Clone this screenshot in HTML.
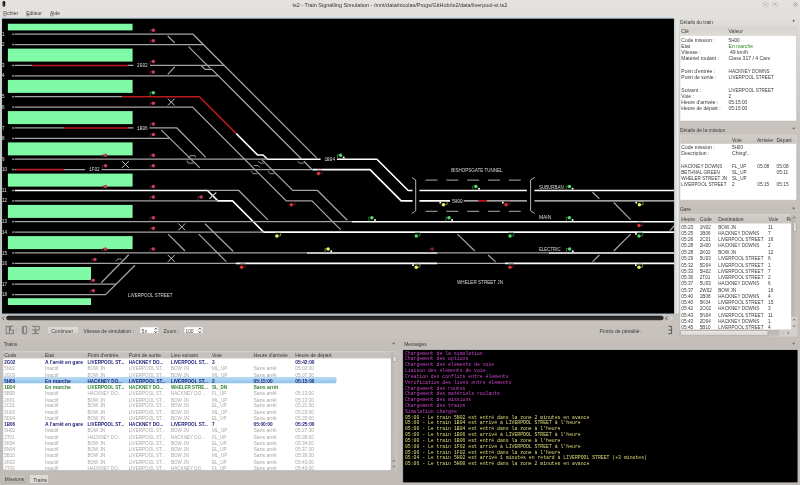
<!DOCTYPE html>
<html lang="fr"><head><meta charset="utf-8"><title>ts2 - Train Signalling Simulation</title>
<style>
html,body{margin:0;padding:0}
body{width:800px;height:485px;overflow:hidden;position:relative;background:#d2cec9;font-family:"Liberation Sans","DejaVu Sans",sans-serif}
#bg{position:absolute;left:0;top:0;width:800px;height:485px;
 background:linear-gradient(#e5e3e0 0,#e2e0dd 17.7px,#d8d5d1 60px,#cec9c4 130px,#c9c4bf 200px,#c7c2bd 339px,#c3beb9 340px,#c0bbb6 485px)}
#bg i{position:absolute;left:679px;top:18px;width:121px;height:322px;background:linear-gradient(#e0deda 0,#c8c3be 110px,#c5c0bb 191px,#c3beb9 322px)}
#ui{position:absolute;left:0;top:0;width:1536px;height:932px;transform:scale(.5208333) translateZ(0);transform-origin:0 0;filter:contrast(1.0001);font-size:9px;color:#3a3a3a}
#ui div,#ui span{position:absolute;box-sizing:border-box}
#ui span{white-space:nowrap;line-height:12px}
#cv{position:absolute;left:0;top:0;will-change:transform}
.w{background:#fff}
.hd{background:linear-gradient(#d6d3cf,#dfdcd8)}
.hdb{background:linear-gradient(#d2cec9,#c9c5c0)}
.hd2{background:linear-gradient(#c9c5c0,#c1bdb8);border-bottom:1px solid #b0aca7}
.g{color:#a6a6a6}
.b{color:#22227c;font-weight:bold}
.gr{color:#2f7f2f;font-weight:bold}
.m{font-family:"Liberation Mono","DejaVu Sans Mono",monospace;font-size:9.22px;line-height:11px}
.mg{color:#c846c8}
.ye{color:#dede7a}
u{text-decoration:underline}
</style></head><body>
<div id="bg"><i></i></div>
<div id="ui">
<span style="left:561.60px;top:3.60px;color:#333;font-size:10.5px">ts2 - Train Signalling Simulation - /mnt/data/nicolas/Progs/GitHub/ts2/data/liverpool-st.ts2</span>
<div style="left:5.38px;top:1.92px;width:4.99px;height:11.14px;background:#151515;border-radius:2.5px"></div>
<div style="left:6.34px;top:3.84px;width:1.92px;height:1.92px;background:#722;border-radius:50%"></div>
<div style="left:6.34px;top:6.72px;width:1.92px;height:1.92px;background:#663;border-radius:50%"></div>
<div style="left:6.34px;top:9.60px;width:1.92px;height:1.92px;background:#9a9;border-radius:50%"></div>
<div style="left:1464.38px;top:2.88px;width:11.14px;height:11.14px;border-radius:50%;background:radial-gradient(#f3f2f1,#d9d6d3);border:1px solid #bfbbb7"></div>
<div style="left:1482.43px;top:2.88px;width:11.14px;height:11.14px;border-radius:50%;background:radial-gradient(#f3f2f1,#d9d6d3);border:1px solid #bfbbb7"></div>
<div style="left:1521.98px;top:2.88px;width:11.14px;height:11.14px;border-radius:50%;background:radial-gradient(#f3f2f1,#d9d6d3);border:1px solid #bfbbb7"></div>
<svg style="position:absolute;left:0;top:0" width="1536" height="20" viewBox="0 0 800 10.4167"><g fill="none" stroke="#6a6a6a" stroke-width="0.7"><path d="M764.3 3.8l1.3 1.3 1.3-1.3"/><path d="M773.7 5.0l1.3-1.3 1.3 1.3"/><path d="M794.4 3.2l2.4 2.4M796.8 3.2l-2.4 2.4"/></g></svg>
<span style="left:6.14px;top:19.92px;font-size:9.5px"><u>F</u>ichier</span>
<span style="left:50.50px;top:19.92px;font-size:9.5px"><u>E</u>diteur</span>
<span style="left:96.00px;top:19.92px;font-size:9.5px"><u>A</u>ide</span>
<div style="left:2.50px;top:33.79px;width:1292.93px;height:570.43px;background:#a6c3d6;border-radius:2px"></div>
<div style="left:3.84px;top:35.90px;width:1290.24px;height:566.21px;background:#000"></div>
<div style="left:12.10px;top:605.95px;width:1261.44px;height:9.02px;background:linear-gradient(#1c1c1c,#343434);border-radius:4px"></div>
<div style="left:1296.38px;top:35.71px;width:7.30px;height:566.78px;background:linear-gradient(90deg,#d9d6d2,#ebe9e7 60%,#dddad6);border-radius:3px"></div>
<div style="left:90.05px;top:625.54px;width:61.63px;height:16.13px;border-radius:3px;background:linear-gradient(#dedbd7,#d2cec9);border:1px solid #bcb8b3"></div>
<span style="left:98.30px;top:629.52px;;font-size:9.7px">Continuer</span>
<span style="left:160.32px;top:629.52px;;font-size:9.7px">Vitesse de simulation :</span>
<div style="left:268.42px;top:626.50px;width:36.86px;height:14.78px;background:#fff;border:1px solid #b4b0ab;border-radius:3px"></div>
<span style="left:271.87px;top:629.52px;;font-size:9.7px">5x</span>
<span style="left:313.92px;top:629.52px;;font-size:9.7px">Zoom :</span>
<div style="left:352.51px;top:626.50px;width:37.63px;height:14.78px;background:#fff;border:1px solid #b4b0ab;border-radius:3px"></div>
<span style="left:356.16px;top:629.52px;;font-size:9.2px">100</span>
<span style="left:1151.04px;top:629.52px;;font-size:9.7px">Points de pénalité :</span>
<span style="left:1305.60px;top:37.58px;font-size:9.5px">Détails du train</span>
<div style="left:1304.83px;top:51.65px;width:225.41px;height:181.06px;background:#fff;border:1px solid #b9b5b0;border-radius:2px"></div>
<div class="hd" style="left:1305.60px;top:52.42px;width:223.87px;height:17.09px;"></div>
<span style="left:1308.10px;top:55.44px;;font-size:9.7px">Clé</span>
<span style="left:1398.91px;top:55.44px;;font-size:9.7px">Valeur</span>
<span style="left:1308.10px;top:71.38px;;font-size:9.7px">Code mission :</span>
<span style="left:1398.91px;top:71.38px;;font-size:8.8px">5H00</span>
<span style="left:1308.10px;top:83.38px;;font-size:9.7px">Etat</span>
<span style="left:1398.91px;top:83.38px;color:#2a8a2a;font-size:9.7px">En marche</span>
<span style="left:1308.10px;top:95.38px;;font-size:9.7px">Vitesse :</span>
<span style="left:1401.60px;top:95.38px;;font-size:9.7px">49 km/h</span>
<span style="left:1308.10px;top:107.38px;;font-size:9.7px">Matériel roulant :</span>
<span style="left:1398.91px;top:107.38px;;font-size:9.7px">Class 317 / 4 Cars</span>
<span style="left:1308.10px;top:131.38px;;font-size:9.7px">Point d'entrée :</span>
<span style="left:1398.91px;top:131.38px;;font-size:8.8px">HACKNEY DOWNS</span>
<span style="left:1308.10px;top:143.38px;;font-size:9.7px">Point de sortie :</span>
<span style="left:1398.91px;top:143.38px;;font-size:8.8px">LIVERPOOL STREET</span>
<span style="left:1308.10px;top:167.38px;;font-size:9.7px">Suivant :</span>
<span style="left:1398.91px;top:167.38px;;font-size:8.8px">LIVERPOOL STREET</span>
<span style="left:1308.10px;top:179.38px;;font-size:9.7px">Voie :</span>
<span style="left:1398.91px;top:179.38px;;font-size:9.2px">2</span>
<span style="left:1308.10px;top:191.38px;;font-size:9.7px">Heure d'arrivée :</span>
<span style="left:1398.91px;top:191.38px;;font-size:9.2px">05:15:00</span>
<span style="left:1308.10px;top:203.38px;;font-size:9.7px">Heure de départ :</span>
<span style="left:1398.91px;top:203.38px;;font-size:9.2px">05:15:00</span>
<span style="left:1305.60px;top:243.60px;font-size:9.5px">Détails de la mission</span>
<div style="left:1304.83px;top:258.43px;width:225.41px;height:126.53px;background:#fff;border:1px solid #b9b5b0;border-radius:2px"></div>
<div class="hdb" style="left:1305.60px;top:259.20px;width:223.87px;height:16.51px;"></div>
<span style="left:1405.44px;top:263.76px;;font-size:9.7px">Voie</span>
<span style="left:1453.44px;top:263.76px;;font-size:9.7px">Arrivée</span>
<span style="left:1490.69px;top:263.76px;;font-size:9.7px">Départ</span>
<span style="left:1308.10px;top:277.01px;;font-size:9.7px">Code mission :</span>
<span style="left:1405.44px;top:277.01px;;font-size:8.8px">5H00</span>
<span style="left:1308.10px;top:289.10px;;font-size:9.7px">Description :</span>
<span style="left:1405.44px;top:289.10px;;font-size:9.7px">Chingf...</span>
<span style="left:1308.10px;top:312.91px;;font-size:8.8px">HACKNEY DOWNS</span>
<span style="left:1405.44px;top:312.91px;;font-size:8.8px">FL_UP</span>
<span style="left:1454.02px;top:312.91px;;font-size:9.2px">05:08</span>
<span style="left:1491.07px;top:312.91px;;font-size:9.2px">05:08</span>
<span style="left:1308.10px;top:324.95px;;font-size:8.8px">BETHNAL GREEN</span>
<span style="left:1405.44px;top:324.95px;;font-size:8.8px">SL_UP</span>
<span style="left:1454.02px;top:324.95px;;font-size:9.2px"></span>
<span style="left:1491.07px;top:324.95px;;font-size:9.2px">05:11</span>
<span style="left:1308.10px;top:336.99px;;font-size:8.8px">WHELER STREET JN</span>
<span style="left:1405.44px;top:336.99px;;font-size:8.8px">SL_UP</span>
<span style="left:1454.02px;top:336.99px;;font-size:9.2px"></span>
<span style="left:1491.07px;top:336.99px;;font-size:9.2px"></span>
<span style="left:1308.10px;top:349.03px;;font-size:8.8px">LIVERPOOL STREET</span>
<span style="left:1405.44px;top:349.03px;;font-size:9.2px">2</span>
<span style="left:1454.02px;top:349.03px;;font-size:9.2px">05:15</span>
<span style="left:1491.07px;top:349.03px;;font-size:9.2px">05:15</span>
<span style="left:1305.60px;top:396.62px;font-size:9.5px">Gare</span>
<div style="left:1304.83px;top:411.26px;width:226.56px;height:235.01px;background:#fff;border:1px solid #b9b5b0;border-radius:2px"></div>
<div class="hdb" style="left:1305.60px;top:412.03px;width:225.02px;height:17.28px;"></div>
<span style="left:1308.10px;top:416.21px;;font-size:9.7px">Heure</span>
<span style="left:1343.62px;top:416.21px;;font-size:9.7px">Code</span>
<span style="left:1379.14px;top:416.21px;;font-size:9.7px">Destination</span>
<span style="left:1475.52px;top:416.21px;;font-size:9.7px">Voie</span>
<span style="left:1510.27px;top:416.21px;;font-size:9.7px">Re</span>
<span style="left:1308.10px;top:430.42px;;font-size:9.2px">05:23</span>
<span style="left:1343.62px;top:430.42px;;font-size:8.8px">1N02</span>
<span style="left:1379.14px;top:430.42px;;font-size:8.8px">BOW JN</span>
<span style="left:1474.56px;top:430.42px;;font-size:9.2px">11</span>
<span style="left:1308.10px;top:442.44px;;font-size:9.2px">05:25</span>
<span style="left:1343.62px;top:442.44px;;font-size:8.8px">1B06</span>
<span style="left:1379.14px;top:442.44px;;font-size:8.8px">HACKNEY DOWNS</span>
<span style="left:1474.56px;top:442.44px;;font-size:9.2px">7</span>
<span style="left:1308.10px;top:454.45px;;font-size:9.2px">05:26</span>
<span style="left:1343.62px;top:454.45px;;font-size:8.8px">2C01</span>
<span style="left:1379.14px;top:454.45px;;font-size:8.8px">LIVERPOOL STREET</span>
<span style="left:1474.56px;top:454.45px;;font-size:9.2px">16</span>
<span style="left:1308.10px;top:466.47px;;font-size:9.2px">05:28</span>
<span style="left:1343.62px;top:466.47px;;font-size:8.8px">2H00</span>
<span style="left:1379.14px;top:466.47px;;font-size:8.8px">HACKNEY DOWNS</span>
<span style="left:1474.56px;top:466.47px;;font-size:9.2px">2</span>
<span style="left:1308.10px;top:478.49px;;font-size:9.2px">05:28</span>
<span style="left:1343.62px;top:478.49px;;font-size:8.8px">2K02</span>
<span style="left:1379.14px;top:478.49px;;font-size:8.8px">BOW JN</span>
<span style="left:1474.56px;top:478.49px;;font-size:9.2px">12</span>
<span style="left:1308.10px;top:490.51px;;font-size:9.2px">05:29</span>
<span style="left:1343.62px;top:490.51px;;font-size:8.8px">5U03</span>
<span style="left:1379.14px;top:490.51px;;font-size:8.8px">LIVERPOOL STREET</span>
<span style="left:1474.56px;top:490.51px;;font-size:9.2px">6</span>
<span style="left:1308.10px;top:502.53px;;font-size:9.2px">05:32</span>
<span style="left:1343.62px;top:502.53px;;font-size:8.8px">5D04</span>
<span style="left:1379.14px;top:502.53px;;font-size:8.8px">LIVERPOOL STREET</span>
<span style="left:1474.56px;top:502.53px;;font-size:9.2px">1</span>
<span style="left:1308.10px;top:514.55px;;font-size:9.2px">05:33</span>
<span style="left:1343.62px;top:514.55px;;font-size:8.8px">5H02</span>
<span style="left:1379.14px;top:514.55px;;font-size:8.8px">LIVERPOOL STREET</span>
<span style="left:1474.56px;top:514.55px;;font-size:9.2px">7</span>
<span style="left:1308.10px;top:526.57px;;font-size:9.2px">05:36</span>
<span style="left:1343.62px;top:526.57px;;font-size:8.8px">2T01</span>
<span style="left:1379.14px;top:526.57px;;font-size:8.8px">LIVERPOOL STREET</span>
<span style="left:1474.56px;top:526.57px;;font-size:9.2px">2</span>
<span style="left:1308.10px;top:538.59px;;font-size:9.2px">05:37</span>
<span style="left:1343.62px;top:538.59px;;font-size:8.8px">5U03</span>
<span style="left:1379.14px;top:538.59px;;font-size:8.8px">HACKNEY DOWNS</span>
<span style="left:1474.56px;top:538.59px;;font-size:9.2px">6</span>
<span style="left:1308.10px;top:550.61px;;font-size:9.2px">05:37</span>
<span style="left:1343.62px;top:550.61px;;font-size:8.8px">2W02</span>
<span style="left:1379.14px;top:550.61px;;font-size:8.8px">BOW JN</span>
<span style="left:1474.56px;top:550.61px;;font-size:9.2px">16</span>
<span style="left:1308.10px;top:562.63px;;font-size:9.2px">05:40</span>
<span style="left:1343.62px;top:562.63px;;font-size:8.8px">1B08</span>
<span style="left:1379.14px;top:562.63px;;font-size:8.8px">HACKNEY DOWNS</span>
<span style="left:1474.56px;top:562.63px;;font-size:9.2px">4</span>
<span style="left:1308.10px;top:574.65px;;font-size:9.2px">05:40</span>
<span style="left:1343.62px;top:574.65px;;font-size:8.8px">5K04</span>
<span style="left:1379.14px;top:574.65px;;font-size:8.8px">LIVERPOOL STREET</span>
<span style="left:1474.56px;top:574.65px;;font-size:9.2px">15</span>
<span style="left:1308.10px;top:586.67px;;font-size:9.2px">05:42</span>
<span style="left:1343.62px;top:586.67px;;font-size:8.8px">2O02</span>
<span style="left:1379.14px;top:586.67px;;font-size:8.8px">HACKNEY DOWNS</span>
<span style="left:1474.56px;top:586.67px;;font-size:9.2px">3</span>
<span style="left:1308.10px;top:598.68px;;font-size:9.2px">05:43</span>
<span style="left:1343.62px;top:598.68px;;font-size:8.8px">5N04</span>
<span style="left:1379.14px;top:598.68px;;font-size:8.8px">LIVERPOOL STREET</span>
<span style="left:1474.56px;top:598.68px;;font-size:9.2px">11</span>
<span style="left:1308.10px;top:610.70px;;font-size:9.2px">05:43</span>
<span style="left:1343.62px;top:610.70px;;font-size:8.8px">2D04</span>
<span style="left:1379.14px;top:610.70px;;font-size:8.8px">HACKNEY DOWNS</span>
<span style="left:1474.56px;top:610.70px;;font-size:9.2px">1</span>
<span style="left:1308.10px;top:622.72px;;font-size:9.2px">05:45</span>
<span style="left:1343.62px;top:622.72px;;font-size:8.8px">5B10</span>
<span style="left:1379.14px;top:622.72px;;font-size:8.8px">LIVERPOOL STREET</span>
<span style="left:1474.56px;top:622.72px;;font-size:9.2px">4</span>
<div style="left:1519.10px;top:412.03px;width:11.71px;height:196.61px;background:linear-gradient(90deg,#b7b2ad,#c6c2bd)"></div>
<div style="left:1519.10px;top:608.64px;width:11.71px;height:24.58px;background:#d3cfca"></div>
<div style="left:1522.56px;top:426.24px;width:7.68px;height:19.20px;background:linear-gradient(90deg,#efeeec,#d2cfca);border:1px solid #9c9893;border-radius:3px"></div>
<div style="left:1305.60px;top:633.22px;width:225.22px;height:12.29px;background:linear-gradient(#b9b4af,#c6c2bd)"></div>
<div style="left:1496.64px;top:633.22px;width:34.18px;height:12.29px;background:#d3cfca"></div>
<div style="left:1306.37px;top:634.37px;width:168.19px;height:10.37px;background:linear-gradient(#ebe9e7,#d6d3cf);border:1px solid #a5a19c;border-radius:3px"></div>
<span style="left:7.10px;top:655.63px;font-size:9.5px">Trains</span>
<div style="left:4.61px;top:674.30px;width:758.78px;height:229.25px;background:#fff;border:1px solid #aaa6a1;border-radius:2px"></div>
<div class="hd2" style="left:5.38px;top:675.07px;width:747.26px;height:13.06px;"></div>
<span style="left:8.06px;top:677.14px;;font-size:9.7px">Code</span>
<span style="left:86.40px;top:677.14px;;font-size:9.7px">Etat</span>
<span style="left:168.00px;top:677.14px;;font-size:9.7px">Point d'entrée</span>
<span style="left:247.30px;top:677.14px;;font-size:9.7px">Point de sortie</span>
<span style="left:328.32px;top:677.14px;;font-size:9.7px">Lieu suivant</span>
<span style="left:407.04px;top:677.14px;;font-size:9.7px">Voie</span>
<span style="left:486.72px;top:677.14px;;font-size:9.7px">Heure d'arrivée</span>
<span style="left:566.98px;top:677.14px;;font-size:9.7px">Heure de départ</span>
<div style="left:4.22px;top:724.26px;width:641.47px;height:11.90px;background:linear-gradient(#b9dcf3,#8ec3ea);border-radius:2px"></div>
<span class="b" style="left:8.06px;top:689.62px;;font-size:8.8px">2G02</span>
<span class="b" style="left:86.40px;top:689.62px;;font-size:9.7px">A l'arrêt en gare</span>
<span class="b" style="left:168.00px;top:689.62px;;font-size:8.8px">LIVERPOOL ST...</span>
<span class="b" style="left:247.30px;top:689.62px;;font-size:8.8px">HACKNEY DO...</span>
<span class="b" style="left:328.32px;top:689.62px;;font-size:8.8px">LIVERPOOL ST...</span>
<span class="b" style="left:407.04px;top:689.62px;;font-size:9.2px">3</span>
<span class="b" style="left:566.98px;top:689.62px;;font-size:9.2px">05:42:00</span>
<span class="g" style="left:8.06px;top:701.60px;;font-size:8.8px">5N02</span>
<span class="g" style="left:86.40px;top:701.60px;;font-size:9.7px">Inactif</span>
<span class="g" style="left:168.00px;top:701.60px;;font-size:8.8px">BOW JN</span>
<span class="g" style="left:247.30px;top:701.60px;;font-size:8.8px">LIVERPOOL ST...</span>
<span class="g" style="left:328.32px;top:701.60px;;font-size:8.8px">BOW JN</span>
<span class="g" style="left:407.04px;top:701.60px;;font-size:8.8px">ML_UP</span>
<span class="g" style="left:486.72px;top:701.60px;;font-size:9.7px">Sans arrêt</span>
<span class="g" style="left:566.98px;top:701.60px;;font-size:9.2px">05:02:30</span>
<span class="g" style="left:8.06px;top:713.58px;;font-size:8.8px">2G03</span>
<span class="g" style="left:86.40px;top:713.58px;;font-size:9.7px">Inactif</span>
<span class="g" style="left:168.00px;top:713.58px;;font-size:8.8px">BOW JN</span>
<span class="g" style="left:247.30px;top:713.58px;;font-size:8.8px">LIVERPOOL ST...</span>
<span class="g" style="left:328.32px;top:713.58px;;font-size:8.8px">BOW JN</span>
<span class="g" style="left:407.04px;top:713.58px;;font-size:8.8px">ML_UP</span>
<span class="g" style="left:486.72px;top:713.58px;;font-size:9.7px">Sans arrêt</span>
<span class="g" style="left:566.98px;top:713.58px;;font-size:9.2px">05:07:30</span>
<span class="b" style="left:8.06px;top:725.56px;;font-size:8.8px">5H00</span>
<span class="b" style="left:86.40px;top:725.56px;;font-size:9.7px">En marche</span>
<span class="b" style="left:168.00px;top:725.56px;;font-size:8.8px">HACKNEY DO...</span>
<span class="b" style="left:247.30px;top:725.56px;;font-size:8.8px">LIVERPOOL ST...</span>
<span class="b" style="left:328.32px;top:725.56px;;font-size:8.8px">LIVERPOOL ST...</span>
<span class="b" style="left:407.04px;top:725.56px;;font-size:9.2px">2</span>
<span class="b" style="left:486.72px;top:725.56px;;font-size:9.2px">05:15:00</span>
<span class="b" style="left:566.98px;top:725.56px;;font-size:9.2px">05:15:00</span>
<span class="gr" style="left:8.06px;top:737.54px;;font-size:8.8px">1B04</span>
<span class="gr" style="left:86.40px;top:737.54px;;font-size:9.7px">En marche</span>
<span class="gr" style="left:168.00px;top:737.54px;;font-size:8.8px">LIVERPOOL ST...</span>
<span class="gr" style="left:247.30px;top:737.54px;;font-size:8.8px">HACKNEY DO...</span>
<span class="gr" style="left:328.32px;top:737.54px;;font-size:8.8px">WHELER STRE...</span>
<span class="gr" style="left:407.04px;top:737.54px;;font-size:8.8px">SL_DN</span>
<span class="gr" style="left:486.72px;top:737.54px;;font-size:9.7px">Sans arrêt</span>
<span class="g" style="left:8.06px;top:749.52px;;font-size:8.8px">5B08</span>
<span class="g" style="left:86.40px;top:749.52px;;font-size:9.7px">Inactif</span>
<span class="g" style="left:168.00px;top:749.52px;;font-size:8.8px">HACKNEY DO...</span>
<span class="g" style="left:247.30px;top:749.52px;;font-size:8.8px">LIVERPOOL ST...</span>
<span class="g" style="left:328.32px;top:749.52px;;font-size:8.8px">HACKNEY DO...</span>
<span class="g" style="left:407.04px;top:749.52px;;font-size:8.8px">FL_UP</span>
<span class="g" style="left:486.72px;top:749.52px;;font-size:9.7px">Sans arrêt</span>
<span class="g" style="left:566.98px;top:749.52px;;font-size:9.2px">05:13:00</span>
<span class="g" style="left:8.06px;top:761.50px;;font-size:8.8px">2K01</span>
<span class="g" style="left:86.40px;top:761.50px;;font-size:9.7px">Inactif</span>
<span class="g" style="left:168.00px;top:761.50px;;font-size:8.8px">BOW JN</span>
<span class="g" style="left:247.30px;top:761.50px;;font-size:8.8px">LIVERPOOL ST...</span>
<span class="g" style="left:328.32px;top:761.50px;;font-size:8.8px">BOW JN</span>
<span class="g" style="left:407.04px;top:761.50px;;font-size:8.8px">ML_UP</span>
<span class="g" style="left:486.72px;top:761.50px;;font-size:9.7px">Sans arrêt</span>
<span class="g" style="left:566.98px;top:761.50px;;font-size:9.2px">05:13:30</span>
<span class="g" style="left:8.06px;top:773.48px;;font-size:8.8px">2C01</span>
<span class="g" style="left:86.40px;top:773.48px;;font-size:9.7px">Inactif</span>
<span class="g" style="left:168.00px;top:773.48px;;font-size:8.8px">BOW JN</span>
<span class="g" style="left:247.30px;top:773.48px;;font-size:8.8px">LIVERPOOL ST...</span>
<span class="g" style="left:328.32px;top:773.48px;;font-size:8.8px">BOW JN</span>
<span class="g" style="left:407.04px;top:773.48px;;font-size:8.8px">EL_UP</span>
<span class="g" style="left:486.72px;top:773.48px;;font-size:9.7px">Sans arrêt</span>
<span class="g" style="left:566.98px;top:773.48px;;font-size:9.2px">05:21:00</span>
<span class="g" style="left:8.06px;top:785.46px;;font-size:8.8px">5U03</span>
<span class="g" style="left:86.40px;top:785.46px;;font-size:9.7px">Inactif</span>
<span class="g" style="left:168.00px;top:785.46px;;font-size:8.8px">BOW JN</span>
<span class="g" style="left:247.30px;top:785.46px;;font-size:8.8px">LIVERPOOL ST...</span>
<span class="g" style="left:328.32px;top:785.46px;;font-size:8.8px">BOW JN</span>
<span class="g" style="left:407.04px;top:785.46px;;font-size:8.8px">ML_UP</span>
<span class="g" style="left:486.72px;top:785.46px;;font-size:9.7px">Sans arrêt</span>
<span class="g" style="left:566.98px;top:785.46px;;font-size:9.2px">05:23:00</span>
<span class="g" style="left:8.06px;top:797.44px;;font-size:8.8px">5D04</span>
<span class="g" style="left:86.40px;top:797.44px;;font-size:9.7px">Inactif</span>
<span class="g" style="left:168.00px;top:797.44px;;font-size:8.8px">BOW JN</span>
<span class="g" style="left:247.30px;top:797.44px;;font-size:8.8px">LIVERPOOL ST...</span>
<span class="g" style="left:328.32px;top:797.44px;;font-size:8.8px">BOW JN</span>
<span class="g" style="left:407.04px;top:797.44px;;font-size:8.8px">EL_UP</span>
<span class="g" style="left:486.72px;top:797.44px;;font-size:9.7px">Sans arrêt</span>
<span class="g" style="left:566.98px;top:797.44px;;font-size:9.2px">05:25:00</span>
<span class="b" style="left:8.06px;top:809.42px;;font-size:8.8px">1B06</span>
<span class="b" style="left:86.40px;top:809.42px;;font-size:9.7px">A l'arrêt en gare</span>
<span class="b" style="left:168.00px;top:809.42px;;font-size:8.8px">LIVERPOOL ST...</span>
<span class="b" style="left:247.30px;top:809.42px;;font-size:8.8px">HACKNEY DO...</span>
<span class="b" style="left:328.32px;top:809.42px;;font-size:8.8px">LIVERPOOL ST...</span>
<span class="b" style="left:407.04px;top:809.42px;;font-size:9.2px">7</span>
<span class="b" style="left:486.72px;top:809.42px;;font-size:9.2px">05:00:00</span>
<span class="b" style="left:566.98px;top:809.42px;;font-size:9.2px">05:25:00</span>
<span class="g" style="left:8.06px;top:821.40px;;font-size:8.8px">5H02</span>
<span class="g" style="left:86.40px;top:821.40px;;font-size:9.7px">Inactif</span>
<span class="g" style="left:168.00px;top:821.40px;;font-size:8.8px">BOW JN</span>
<span class="g" style="left:247.30px;top:821.40px;;font-size:8.8px">LIVERPOOL ST...</span>
<span class="g" style="left:328.32px;top:821.40px;;font-size:8.8px">BOW JN</span>
<span class="g" style="left:407.04px;top:821.40px;;font-size:8.8px">ML_UP</span>
<span class="g" style="left:486.72px;top:821.40px;;font-size:9.7px">Sans arrêt</span>
<span class="g" style="left:566.98px;top:821.40px;;font-size:9.2px">05:27:30</span>
<span class="g" style="left:8.06px;top:833.39px;;font-size:8.8px">2T01</span>
<span class="g" style="left:86.40px;top:833.39px;;font-size:9.7px">Inactif</span>
<span class="g" style="left:168.00px;top:833.39px;;font-size:8.8px">HACKNEY DO...</span>
<span class="g" style="left:247.30px;top:833.39px;;font-size:8.8px">LIVERPOOL ST...</span>
<span class="g" style="left:328.32px;top:833.39px;;font-size:8.8px">HACKNEY DO...</span>
<span class="g" style="left:407.04px;top:833.39px;;font-size:8.8px">FL_UP</span>
<span class="g" style="left:486.72px;top:833.39px;;font-size:9.7px">Sans arrêt</span>
<span class="g" style="left:566.98px;top:833.39px;;font-size:9.2px">05:28:00</span>
<span class="g" style="left:8.06px;top:845.37px;;font-size:8.8px">5K04</span>
<span class="g" style="left:86.40px;top:845.37px;;font-size:9.7px">Inactif</span>
<span class="g" style="left:168.00px;top:845.37px;;font-size:8.8px">BOW JN</span>
<span class="g" style="left:247.30px;top:845.37px;;font-size:8.8px">LIVERPOOL ST...</span>
<span class="g" style="left:328.32px;top:845.37px;;font-size:8.8px">BOW JN</span>
<span class="g" style="left:407.04px;top:845.37px;;font-size:8.8px">EL_UP</span>
<span class="g" style="left:486.72px;top:845.37px;;font-size:9.7px">Sans arrêt</span>
<span class="g" style="left:566.98px;top:845.37px;;font-size:9.2px">05:34:00</span>
<span class="g" style="left:8.06px;top:857.35px;;font-size:8.8px">5N04</span>
<span class="g" style="left:86.40px;top:857.35px;;font-size:9.7px">Inactif</span>
<span class="g" style="left:168.00px;top:857.35px;;font-size:8.8px">BOW JN</span>
<span class="g" style="left:247.30px;top:857.35px;;font-size:8.8px">LIVERPOOL ST...</span>
<span class="g" style="left:328.32px;top:857.35px;;font-size:8.8px">BOW JN</span>
<span class="g" style="left:407.04px;top:857.35px;;font-size:8.8px">EL_UP</span>
<span class="g" style="left:486.72px;top:857.35px;;font-size:9.7px">Sans arrêt</span>
<span class="g" style="left:566.98px;top:857.35px;;font-size:9.2px">05:37:30</span>
<span class="g" style="left:8.06px;top:869.33px;;font-size:8.8px">5B10</span>
<span class="g" style="left:86.40px;top:869.33px;;font-size:9.7px">Inactif</span>
<span class="g" style="left:168.00px;top:869.33px;;font-size:8.8px">BOW JN</span>
<span class="g" style="left:247.30px;top:869.33px;;font-size:8.8px">LIVERPOOL ST...</span>
<span class="g" style="left:328.32px;top:869.33px;;font-size:8.8px">BOW JN</span>
<span class="g" style="left:407.04px;top:869.33px;;font-size:8.8px">ML_UP</span>
<span class="g" style="left:486.72px;top:869.33px;;font-size:9.7px">Sans arrêt</span>
<span class="g" style="left:566.98px;top:869.33px;;font-size:9.2px">05:39:30</span>
<span class="g" style="left:8.06px;top:881.31px;;font-size:8.8px">2K03</span>
<span class="g" style="left:86.40px;top:881.31px;;font-size:9.7px">Inactif</span>
<span class="g" style="left:168.00px;top:881.31px;;font-size:8.8px">BOW JN</span>
<span class="g" style="left:247.30px;top:881.31px;;font-size:8.8px">LIVERPOOL ST...</span>
<span class="g" style="left:328.32px;top:881.31px;;font-size:8.8px">BOW JN</span>
<span class="g" style="left:407.04px;top:881.31px;;font-size:8.8px">EL_UP</span>
<span class="g" style="left:486.72px;top:881.31px;;font-size:9.7px">Sans arrêt</span>
<span class="g" style="left:566.98px;top:881.31px;;font-size:9.2px">05:43:00</span>
<span class="g" style="left:8.06px;top:893.29px;;font-size:8.8px">2T03</span>
<span class="g" style="left:86.40px;top:893.29px;;font-size:9.7px">Inactif</span>
<span class="g" style="left:168.00px;top:893.29px;;font-size:8.8px">HACKNEY DO...</span>
<span class="g" style="left:247.30px;top:893.29px;;font-size:8.8px">LIVERPOOL ST...</span>
<span class="g" style="left:328.32px;top:893.29px;;font-size:8.8px">HACKNEY DO...</span>
<span class="g" style="left:407.04px;top:893.29px;;font-size:8.8px">FL_UP</span>
<span class="g" style="left:486.72px;top:893.29px;;font-size:9.7px">Sans arrêt</span>
<span class="g" style="left:566.98px;top:893.29px;;font-size:9.2px">05:43:00</span>
<div style="left:750.14px;top:675.07px;width:12.48px;height:227.71px;background:linear-gradient(90deg,#b9b5b0,#c9c5c0)"></div>
<div style="left:753.79px;top:683.14px;width:8.06px;height:11.90px;background:linear-gradient(90deg,#efeeec,#cfccc7);border:1px solid #9c9893;border-radius:3px"></div>
<div style="left:2.69px;top:913.54px;width:46.85px;height:13.63px;background:linear-gradient(#c9c5c0,#bfbbb6);border:1px solid #a5a19c;border-top:none;border-radius:0 0 3px 3px"></div>
<span style="left:8.83px;top:915.41px;;font-size:9.7px">Missions</span>
<div style="left:56.45px;top:912.38px;width:37.25px;height:16.13px;background:#dedbd7;border:1px solid #b3afaa;border-top:none;border-radius:0 0 3px 3px"></div>
<span style="left:63.74px;top:915.79px;;font-size:9.7px">Trains</span>
<span style="left:776.06px;top:655.44px;font-size:9.5px">Messages</span>
<div style="left:772.99px;top:670.85px;width:758.98px;height:256.32px;background:#8e8a85;border-radius:2px"></div>
<div style="left:773.95px;top:671.62px;width:757.25px;height:254.78px;background:#000;border-radius:1px"></div>
<span class="m mg" style="left:777.41px;top:673.03px;">Chargement de la simulation</span>
<span class="m mg" style="left:777.41px;top:684.18px;">Chargement des options</span>
<span class="m mg" style="left:777.41px;top:695.34px;">Chargement des éléments de voie</span>
<span class="m mg" style="left:777.41px;top:706.49px;">Liaison des éléments de voie</span>
<span class="m mg" style="left:777.41px;top:717.65px;">Création des conflits entre éléments</span>
<span class="m mg" style="left:777.41px;top:728.80px;">Vérification des liens entre éléments</span>
<span class="m mg" style="left:777.41px;top:739.96px;">Chargement des routes</span>
<span class="m mg" style="left:777.41px;top:751.11px;">Chargement des matériels roulants</span>
<span class="m mg" style="left:777.41px;top:762.27px;">Chargement des missions</span>
<span class="m mg" style="left:777.41px;top:773.42px;">Chargement des trains</span>
<span class="m mg" style="left:777.41px;top:784.58px;">Simulation chargée</span>
<span class="m ye" style="left:777.41px;top:795.74px;">05:00 - Le train 5N02 est entré dans la zone 2 minutes en avance</span>
<span class="m ye" style="left:777.41px;top:806.89px;">05:00 - Le train 1B04 est arrivé à LIVERPOOL STREET à l'heure</span>
<span class="m ye" style="left:777.41px;top:818.05px;">05:00 - Le train 1B04 est entré dans la zone à l'heure</span>
<span class="m ye" style="left:777.41px;top:829.20px;">05:00 - Le train 1B06 est arrivé à LIVERPOOL STREET à l'heure</span>
<span class="m ye" style="left:777.41px;top:840.36px;">05:00 - Le train 1B06 est entré dans la zone à l'heure</span>
<span class="m ye" style="left:777.41px;top:851.51px;">05:00 - Le train 1F02 est arrivé à LIVERPOOL STREET à l'heure</span>
<span class="m ye" style="left:777.41px;top:862.67px;">05:00 - Le train 1F02 est entré dans la zone à l'heure</span>
<span class="m ye" style="left:777.41px;top:873.82px;">05:04 - Le train 5H02 est arrivé 1 minutes en retard à LIVERPOOL STREET (+3 minutes)</span>
<span class="m ye" style="left:777.41px;top:884.98px;">05:06 - Le train 5H00 est entré dans la zone 2 minutes en avance</span>
</div>
<svg id="cv" width="800" height="485" viewBox="0 0 800 485" font-family="'Liberation Sans','DejaVu Sans',sans-serif">
<clipPath id="cc"><rect x="2" y="18.7" width="672" height="294.9"/></clipPath><g clip-path="url(#cc)" stroke-linecap="butt">
<rect x="7.9" y="23.75" width="124.69999999999999" height="6.65" fill="#80faa6"/>
<rect x="7.9" y="48.6" width="124.69999999999999" height="13.00" fill="#80faa6"/>
<rect x="7.9" y="79.9" width="124.69999999999999" height="13.00" fill="#80faa6"/>
<rect x="7.9" y="111.1" width="124.69999999999999" height="13.00" fill="#80faa6"/>
<rect x="7.9" y="142.4" width="124.69999999999999" height="13.00" fill="#80faa6"/>
<rect x="7.9" y="173.6" width="124.69999999999999" height="13.00" fill="#80faa6"/>
<rect x="7.9" y="204.9" width="124.69999999999999" height="13.00" fill="#80faa6"/>
<rect x="7.9" y="236.1" width="124.69999999999999" height="13.00" fill="#80faa6"/>
<rect x="7.9" y="267" width="83.1" height="13.00" fill="#80faa6"/>
<rect x="7.9" y="298.2" width="83.1" height="6.80" fill="#80faa6"/>
<path d="M14.90 34.22 L193.00 34.22 L316.60 157.82" stroke="#a4a4a6" stroke-width="1.25" fill="none" />
<path d="M14.90 44.64 L203.40 44.64" stroke="#a4a4a6" stroke-width="1.25" fill="none" />
<path d="M167.75 36.00 L174.75 42.90" stroke="#a4a4a6" stroke-width="1.25" fill="none" />
<path d="M188.50 46.60 L210.30 68.40" stroke="#a4a4a6" stroke-width="1.25" fill="none" />
<path d="M14.90 65.47 L32.00 65.47" stroke="#a4a4a6" stroke-width="1.25" fill="none" />
<path d="M32.00 65.47 L128.00 65.47" stroke="#b81a1e" stroke-width="1.6" fill="none" />
<path d="M128.00 65.47 L133.50 65.47" stroke="#a4a4a6" stroke-width="1.25" fill="none" />
<path d="M150.00 65.47 L224.30 65.47" stroke="#a4a4a6" stroke-width="1.25" fill="none" />
<path d="M201.25 65.47 L205.00 69.40 L211.90 69.40 L301.20 158.70" stroke="#a4a4a6" stroke-width="1.25" fill="none" />
<path d="M303.75 161.25 L312.00 169.50" stroke="#a4a4a6" stroke-width="1.25" fill="none" />
<path d="M14.90 75.89 L218.40 75.89" stroke="#a4a4a6" stroke-width="1.25" fill="none" />
<path d="M174.75 66.90 L167.75 74.40" stroke="#a4a4a6" stroke-width="1.25" fill="none" />
<path d="M14.90 96.72 L122.50 96.72" stroke="#a4a4a6" stroke-width="1.25" fill="none" />
<path d="M122.50 96.72 L199.40 96.72 L236.30 133.62" stroke="#b81a1e" stroke-width="1.6" fill="none" />
<path d="M236.30 133.62 L257.50 154.90 L263.00 154.90 L267.60 159.22 L320.60 159.22" stroke="#ffffff" stroke-width="1.55" fill="none" />
<path d="M14.90 107.14 L192.50 107.14 L286.30 200.89 L311.90 200.89 L340.60 229.60" stroke="#a4a4a6" stroke-width="1.25" fill="none" />
<path d="M14.90 127.97 L64.00 127.97" stroke="#a4a4a6" stroke-width="1.25" fill="none" />
<path d="M64.00 127.97 L128.00 127.97" stroke="#b81a1e" stroke-width="1.6" fill="none" />
<path d="M128.00 127.97 L133.50 127.97" stroke="#a4a4a6" stroke-width="1.25" fill="none" />
<path d="M149.50 127.97 L176.90 127.97 L205.80 157.40" stroke="#a4a4a6" stroke-width="1.25" fill="none" />
<path d="M14.90 138.39 L169.70 138.39" stroke="#a4a4a6" stroke-width="1.25" fill="none" />
<path d="M161.25 129.90 L199.80 167.90" stroke="#a4a4a6" stroke-width="1.25" fill="none" />
<path d="M14.90 159.22 L267.60 159.22" stroke="#a4a4a6" stroke-width="1.25" fill="none" />
<path d="M336.90 159.22 L376.90 159.22 L408.20 190.47 L412.50 190.47" stroke="#ffffff" stroke-width="1.55" fill="none" />
<path d="M14.90 169.64 L16.00 169.64" stroke="#a4a4a6" stroke-width="1.25" fill="none" />
<path d="M16.00 169.64 L64.00 169.64" stroke="#b81a1e" stroke-width="1.6" fill="none" />
<path d="M64.00 169.64 L85.00 169.64" stroke="#a4a4a6" stroke-width="1.25" fill="none" />
<path d="M101.50 169.64 L312.50 169.64" stroke="#a4a4a6" stroke-width="1.25" fill="none" />
<path d="M312.50 169.64 L370.00 169.64 L401.20 200.89 L412.50 200.89" stroke="#ffffff" stroke-width="1.55" fill="none" />
<path d="M419.40 190.47 L526.90 190.47" stroke="#ffffff" stroke-width="1.55" fill="none" />
<path d="M534.40 190.47 L674.00 190.47" stroke="#ffffff" stroke-width="1.55" fill="none" />
<path d="M419.40 200.89 L450.00 200.89" stroke="#ffffff" stroke-width="1.55" fill="none" />
<path d="M463.80 200.89 L478.70 200.89" stroke="#d8d8d8" stroke-width="1.25" fill="none" />
<path d="M478.70 200.89 L486.90 200.89" stroke="#b81a1e" stroke-width="1.6" fill="none" />
<path d="M486.90 200.89 L526.90 200.89" stroke="#d8d8d8" stroke-width="1.25" fill="none" />
<path d="M534.40 200.89 L674.00 200.89" stroke="#d8d8d8" stroke-width="1.25" fill="none" />
<path d="M425.60 180.10 L437.50 180.10" stroke="#8a8a8a" stroke-width="1.25" fill="none" />
<path d="M446.40 180.10 L458.30 180.10" stroke="#8a8a8a" stroke-width="1.25" fill="none" />
<path d="M467.20 180.10 L479.10 180.10" stroke="#8a8a8a" stroke-width="1.25" fill="none" />
<path d="M488.00 180.10 L499.90 180.10" stroke="#8a8a8a" stroke-width="1.25" fill="none" />
<path d="M508.80 180.10 L520.70 180.10" stroke="#8a8a8a" stroke-width="1.25" fill="none" />
<path d="M425.60 211.30 L437.50 211.30" stroke="#8a8a8a" stroke-width="1.25" fill="none" />
<path d="M446.40 211.30 L458.30 211.30" stroke="#8a8a8a" stroke-width="1.25" fill="none" />
<path d="M467.20 211.30 L479.10 211.30" stroke="#8a8a8a" stroke-width="1.25" fill="none" />
<path d="M488.00 211.30 L499.90 211.30" stroke="#8a8a8a" stroke-width="1.25" fill="none" />
<path d="M508.80 211.30 L520.70 211.30" stroke="#8a8a8a" stroke-width="1.25" fill="none" />
<path d="M411.90 177.50 L415.70 180.00 L415.70 210.80 L411.90 213.40" stroke="#c8c8c8" stroke-width="0.9" fill="none" />
<path d="M534.60 177.50 L530.60 180.00 L530.60 210.80 L534.60 213.40" stroke="#c8c8c8" stroke-width="0.9" fill="none" />
<path d="M14.90 190.47 L207.50 190.47 L217.90 200.89 L232.50 200.89 L263.70 232.14 L674.00 232.14" stroke="#ffffff" stroke-width="1.55" fill="none" />
<path d="M207.50 190.47 L238.75 190.47 L268.00 219.90" stroke="#a4a4a6" stroke-width="1.25" fill="none" />
<path d="M209.40 198.75 L216.25 192.50" stroke="#c0c0c0" stroke-width="1.25" fill="none" />
<path d="M14.90 200.89 L217.90 200.89" stroke="#a4a4a6" stroke-width="1.25" fill="none" />
<path d="M261.80 159.60 L292.70 190.47 L317.50 190.47 L347.30 220.30" stroke="#a4a4a6" stroke-width="1.25" fill="none" />
<path d="M258.10 161.25 L260.00 163.10 L263.75 163.10" stroke="#a8a8a8" stroke-width="0.9" fill="none" />
<path d="M268.10 171.25 L270.00 173.75 L274.40 173.75" stroke="#a8a8a8" stroke-width="0.9" fill="none" />
<path d="M253.75 165.60 L258.10 165.60 L260.00 167.50" stroke="#a8a8a8" stroke-width="0.9" fill="none" />
<path d="M251.25 171.25 L253.10 173.75 L257.50 173.75" stroke="#a8a8a8" stroke-width="0.9" fill="none" />
<path d="M297.50 161.25 L299.40 163.10 L303.75 163.10" stroke="#a8a8a8" stroke-width="0.9" fill="none" />
<path d="M188.75 157.70 L190.00 155.70 L195.00 155.70 L195.70 157.50" stroke="#a8a8a8" stroke-width="0.9" fill="none" />
<path d="M186.90 160.60 L188.10 163.10 L193.75 163.10" stroke="#a8a8a8" stroke-width="0.9" fill="none" />
<path d="M14.90 221.72 L351.90 221.72" stroke="#a4a4a6" stroke-width="1.25" fill="none" />
<path d="M351.90 221.72 L674.00 221.72" stroke="#ffffff" stroke-width="1.55" fill="none" />
<path d="M14.90 232.14 L263.70 232.14" stroke="#a4a4a6" stroke-width="1.25" fill="none" />
<path d="M205.00 223.75 L233.10 251.25" stroke="#a4a4a6" stroke-width="1.25" fill="none" />
<path d="M168.10 234.10 L185.00 251.00" stroke="#a4a4a6" stroke-width="1.25" fill="none" />
<path d="M198.75 234.10 L226.25 261.60" stroke="#a4a4a6" stroke-width="1.25" fill="none" />
<path d="M14.90 252.97 L306.90 252.97" stroke="#a4a4a6" stroke-width="1.25" fill="none" />
<path d="M306.90 252.97 L437.50 252.97" stroke="#ffffff" stroke-width="1.55" fill="none" />
<path d="M437.50 252.97 L548.75 252.97" stroke="#a4a4a6" stroke-width="1.25" fill="none" />
<path d="M548.75 252.97 L674.00 252.97" stroke="#ffffff" stroke-width="1.55" fill="none" />
<path d="M14.90 263.39 L235.60 263.39" stroke="#a4a4a6" stroke-width="1.25" fill="none" />
<path d="M235.60 263.39 L437.50 263.39" stroke="#ffffff" stroke-width="1.55" fill="none" />
<path d="M437.50 263.39 L505.00 263.39" stroke="#b4b4b4" stroke-width="1.25" fill="none" />
<path d="M505.00 263.39 L674.00 263.39" stroke="#ffffff" stroke-width="1.55" fill="none" />
<path d="M14.90 284.22 L116.30 284.22" stroke="#a4a4a6" stroke-width="1.25" fill="none" />
<path d="M14.90 294.64 L105.60 294.64 L135.00 265.20" stroke="#a4a4a6" stroke-width="1.25" fill="none" />
<path d="M101.25 282.75 L128.75 254.75" stroke="#a4a4a6" stroke-width="1.25" fill="none" />
<path d="M115.6 261.3q1.2-2.6 3.6-2.4l2.4 .4" stroke="#a8a8a8" stroke-width=".9" fill="none"/>
<path d="M592.50 192.25 L599.40 198.75" stroke="#a4a4a6" stroke-width="1.25" fill="none" />
<path d="M613.75 202.50 L630.60 219.60" stroke="#a4a4a6" stroke-width="1.25" fill="none" />
<path d="M457.50 234.10 L474.75 251.00" stroke="#a4a4a6" stroke-width="1.25" fill="none" />
<path d="M488.10 255.00 L495.60 261.90" stroke="#a4a4a6" stroke-width="1.25" fill="none" />
<path d="M630.60 234.10 L613.75 251.00" stroke="#a4a4a6" stroke-width="1.25" fill="none" />
<path d="M599.40 255.00 L592.50 261.90" stroke="#a4a4a6" stroke-width="1.25" fill="none" />
<path d="M674.00 226.00 L670.00 230.60" stroke="#a4a4a6" stroke-width="1.25" fill="none" />
<path d="M167.85 98.70 L174.65 105.50" stroke="#c4c4c4" stroke-width="1.0" fill="none" />
<path d="M167.85 105.50 L174.65 98.70" stroke="#c4c4c4" stroke-width="1.0" fill="none" />
<path d="M122.00 161.10 L128.80 167.90" stroke="#c4c4c4" stroke-width="1.0" fill="none" />
<path d="M122.00 167.90 L128.80 161.10" stroke="#c4c4c4" stroke-width="1.0" fill="none" />
<path d="M178.30 223.50 L185.10 230.30" stroke="#c4c4c4" stroke-width="1.0" fill="none" />
<path d="M178.30 230.30 L185.10 223.50" stroke="#c4c4c4" stroke-width="1.0" fill="none" />
<path d="M167.85 255.00 L174.65 261.80" stroke="#c4c4c4" stroke-width="1.0" fill="none" />
<path d="M167.85 261.80 L174.65 255.00" stroke="#c4c4c4" stroke-width="1.0" fill="none" />
<path d="M11.9 34.22h2.6M13.1 33.22v2" stroke="#b0b0b0" stroke-width=".7" fill="none"/>
<text x="2.1" y="35.82" font-size="4.5" fill="#e0e0e0">1</text>
<path d="M11.9 44.64h2.6M13.1 43.64v2" stroke="#b0b0b0" stroke-width=".7" fill="none"/>
<text x="2.1" y="46.24" font-size="4.5" fill="#e0e0e0">2</text>
<path d="M11.9 65.47h2.6M13.1 64.47v2" stroke="#b0b0b0" stroke-width=".7" fill="none"/>
<text x="2.1" y="67.07" font-size="4.5" fill="#e0e0e0">3</text>
<path d="M11.9 75.89h2.6M13.1 74.89v2" stroke="#b0b0b0" stroke-width=".7" fill="none"/>
<text x="2.1" y="77.49" font-size="4.5" fill="#e0e0e0">4</text>
<path d="M11.9 96.72h2.6M13.1 95.72v2" stroke="#b0b0b0" stroke-width=".7" fill="none"/>
<text x="2.1" y="98.32" font-size="4.5" fill="#e0e0e0">5</text>
<path d="M11.9 107.14h2.6M13.1 106.14v2" stroke="#b0b0b0" stroke-width=".7" fill="none"/>
<text x="2.1" y="108.74" font-size="4.5" fill="#e0e0e0">6</text>
<path d="M11.9 127.97h2.6M13.1 126.97v2" stroke="#b0b0b0" stroke-width=".7" fill="none"/>
<text x="2.1" y="129.57" font-size="4.5" fill="#e0e0e0">7</text>
<path d="M11.9 138.39h2.6M13.1 137.39v2" stroke="#b0b0b0" stroke-width=".7" fill="none"/>
<text x="2.1" y="139.99" font-size="4.5" fill="#e0e0e0">8</text>
<path d="M11.9 159.22h2.6M13.1 158.22v2" stroke="#b0b0b0" stroke-width=".7" fill="none"/>
<text x="2.1" y="160.82" font-size="4.5" fill="#e0e0e0">9</text>
<path d="M11.9 169.64h2.6M13.1 168.64v2" stroke="#b0b0b0" stroke-width=".7" fill="none"/>
<text x="2.1" y="171.24" font-size="4.5" fill="#e0e0e0">10</text>
<path d="M11.9 190.47h2.6M13.1 189.47v2" stroke="#b0b0b0" stroke-width=".7" fill="none"/>
<text x="2.1" y="192.07" font-size="4.5" fill="#e0e0e0">11</text>
<path d="M11.9 200.89h2.6M13.1 199.89v2" stroke="#b0b0b0" stroke-width=".7" fill="none"/>
<text x="2.1" y="202.49" font-size="4.5" fill="#e0e0e0">12</text>
<path d="M11.9 221.72h2.6M13.1 220.72v2" stroke="#b0b0b0" stroke-width=".7" fill="none"/>
<text x="2.1" y="223.32" font-size="4.5" fill="#e0e0e0">13</text>
<path d="M11.9 232.14h2.6M13.1 231.14v2" stroke="#b0b0b0" stroke-width=".7" fill="none"/>
<text x="2.1" y="233.74" font-size="4.5" fill="#e0e0e0">14</text>
<path d="M11.9 252.97h2.6M13.1 251.97v2" stroke="#b0b0b0" stroke-width=".7" fill="none"/>
<text x="2.1" y="254.57" font-size="4.5" fill="#e0e0e0">15</text>
<path d="M11.9 263.39h2.6M13.1 262.39v2" stroke="#b0b0b0" stroke-width=".7" fill="none"/>
<text x="2.1" y="264.99" font-size="4.5" fill="#e0e0e0">16</text>
<path d="M11.9 284.22h2.6M13.1 283.22v2" stroke="#b0b0b0" stroke-width=".7" fill="none"/>
<text x="2.1" y="285.82" font-size="4.5" fill="#e0e0e0">17</text>
<path d="M11.9 294.64h2.6M13.1 293.64v2" stroke="#b0b0b0" stroke-width=".7" fill="none"/>
<text x="2.1" y="296.24" font-size="4.5" fill="#e0e0e0">18</text>
<path d="M150.20 33.92V29.82H151.90" stroke="#6e3038" stroke-width=".65" fill="none"/>
<circle cx="153.30" cy="30.32" r="1.75" fill="#cc3c58"/>
<path d="M150.20 44.34V40.24H151.90" stroke="#6e3038" stroke-width=".65" fill="none"/>
<circle cx="153.30" cy="40.74" r="1.75" fill="#cc3c58"/>
<path d="M150.20 65.17V61.07H151.90" stroke="#6e3038" stroke-width=".65" fill="none"/>
<circle cx="153.30" cy="61.57" r="1.75" fill="#cc3c58"/>
<path d="M150.20 75.59V71.49H151.90" stroke="#6e3038" stroke-width=".65" fill="none"/>
<circle cx="153.30" cy="71.99" r="1.75" fill="#cc3c58"/>
<path d="M150.20 96.42V92.32H151.90" stroke="#4c9c58" stroke-width=".65" fill="none"/>
<circle cx="153.30" cy="92.82" r="1.75" fill="#52d866"/>
<path d="M150.20 106.84V102.74H151.90" stroke="#6e3038" stroke-width=".65" fill="none"/>
<circle cx="153.30" cy="103.24" r="1.75" fill="#cc3c58"/>
<path d="M150.20 127.67V123.57H151.90" stroke="#6e3038" stroke-width=".65" fill="none"/>
<circle cx="153.30" cy="124.07" r="1.75" fill="#cc3c58"/>
<path d="M150.20 138.09V133.99H151.90" stroke="#6e3038" stroke-width=".65" fill="none"/>
<circle cx="153.30" cy="134.49" r="1.75" fill="#cc3c58"/>
<path d="M150.20 158.92V154.82H151.90" stroke="#6e3038" stroke-width=".65" fill="none"/>
<circle cx="153.30" cy="155.32" r="1.75" fill="#cc3c58"/>
<path d="M150.20 169.34V165.24H151.90" stroke="#6e3038" stroke-width=".65" fill="none"/>
<circle cx="153.30" cy="165.74" r="1.75" fill="#cc3c58"/>
<path d="M150.20 190.17V186.07H151.90" stroke="#6e3038" stroke-width=".65" fill="none"/>
<circle cx="153.30" cy="186.57" r="1.75" fill="#cc3c58"/>
<path d="M150.20 200.59V196.49H151.90" stroke="#6e3038" stroke-width=".65" fill="none"/>
<circle cx="153.30" cy="196.99" r="1.75" fill="#cc3c58"/>
<path d="M150.20 221.42V217.32H151.90" stroke="#6e3038" stroke-width=".65" fill="none"/>
<circle cx="153.30" cy="217.82" r="1.75" fill="#cc3c58"/>
<path d="M150.20 231.84V227.74H151.90" stroke="#6e3038" stroke-width=".65" fill="none"/>
<circle cx="153.30" cy="228.24" r="1.75" fill="#cc3c58"/>
<path d="M150.20 252.67V248.57H151.90" stroke="#6e3038" stroke-width=".65" fill="none"/>
<circle cx="153.30" cy="249.07" r="1.75" fill="#cc3c58"/>
<path d="M102.50 158.92V154.82H104.20" stroke="#6e3038" stroke-width=".65" fill="none"/>
<circle cx="105.60" cy="155.32" r="1.75" fill="#cc3c58"/>
<path d="M102.50 169.34V165.24H104.20" stroke="#6e3038" stroke-width=".65" fill="none"/>
<circle cx="105.60" cy="165.74" r="1.75" fill="#cc3c58"/>
<path d="M102.50 190.17V186.07H104.20" stroke="#6e3038" stroke-width=".65" fill="none"/>
<circle cx="105.60" cy="186.57" r="1.75" fill="#cc3c58"/>
<path d="M102.50 252.67V248.57H104.20" stroke="#6e3038" stroke-width=".65" fill="none"/>
<circle cx="105.60" cy="249.07" r="1.75" fill="#cc3c58"/>
<path d="M91.80 263.09V258.99H93.50" stroke="#6e3038" stroke-width=".65" fill="none"/>
<circle cx="94.90" cy="259.49" r="1.75" fill="#cc3c58"/>
<path d="M90.10 283.92V279.82H91.80" stroke="#6e3038" stroke-width=".65" fill="none"/>
<circle cx="93.20" cy="280.32" r="1.75" fill="#cc3c58"/>
<path d="M90.10 294.34V290.24H91.80" stroke="#6e3038" stroke-width=".65" fill="none"/>
<circle cx="93.20" cy="290.74" r="1.75" fill="#cc3c58"/>
<path d="M198.00 200.59V196.49H199.70" stroke="#6e3038" stroke-width=".65" fill="none"/>
<circle cx="201.10" cy="196.99" r="1.75" fill="#cc3c58"/>
<path d="M316.90 170.09H322.20V173.39H320.10" stroke="#7a3030" stroke-width=".65" fill="none"/>
<circle cx="318.50" cy="173.39" r="1.75" fill="#e03434"/>
<path d="M289.65 201.34H294.95V204.64H292.85" stroke="#7a3030" stroke-width=".65" fill="none"/>
<circle cx="291.25" cy="204.64" r="1.75" fill="#e03434"/>
<path d="M337.50 158.92V154.82H339.20" stroke="#4c9c58" stroke-width=".65" fill="none"/>
<circle cx="340.60" cy="155.32" r="1.75" fill="#52d866"/>
<rect x="342.90" y="156.62" width="1.7" height="1.7" fill="#fff"/>
<path d="M368.80 221.42V217.32H370.50" stroke="#4c9c58" stroke-width=".65" fill="none"/>
<circle cx="371.90" cy="217.82" r="1.75" fill="#52d866"/>
<rect x="374.20" y="219.12" width="1.7" height="1.7" fill="#fff"/>
<path d="M275.30 232.59H280.60V235.89H278.50" stroke="#b4b470" stroke-width=".65" fill="none"/>
<circle cx="276.90" cy="235.89" r="1.75" fill="#eef25a"/>
<path d="M325.00 252.67V248.57H326.70" stroke="#b4b470" stroke-width=".65" fill="none"/>
<circle cx="328.10" cy="249.07" r="1.75" fill="#eef25a"/>
<rect x="330.40" y="250.37" width="1.7" height="1.7" fill="#fff"/>
<path d="M240.00 263.84H245.30V267.14H243.20" stroke="#7a3030" stroke-width=".65" fill="none"/>
<circle cx="241.60" cy="267.14" r="1.75" fill="#e03434"/>
<path d="M414.65 232.59H419.95V235.89H417.85" stroke="#4c9c58" stroke-width=".65" fill="none"/>
<circle cx="416.25" cy="235.89" r="1.75" fill="#52d866"/>
<path d="M414.65 263.84H419.95V267.14H417.85" stroke="#b4b470" stroke-width=".65" fill="none"/>
<circle cx="416.25" cy="267.14" r="1.75" fill="#eef25a"/>
<rect x="412.25" y="264.29" width="1.7" height="1.7" fill="#fff"/>
<path d="M429.15 252.67V248.57H430.85" stroke="#4a1418" stroke-width=".65" fill="none"/>
<circle cx="432.25" cy="249.07" r="1.75" fill="#8c1c24"/>
<path d="M472.80 190.17V186.07H474.50" stroke="#4c9c58" stroke-width=".65" fill="none"/>
<circle cx="475.90" cy="186.57" r="1.75" fill="#52d866"/>
<rect x="478.20" y="187.87" width="1.7" height="1.7" fill="#fff"/>
<path d="M441.80 201.34H447.10V204.64H445.00" stroke="#b4b470" stroke-width=".65" fill="none"/>
<circle cx="443.40" cy="204.64" r="1.75" fill="#eef25a"/>
<rect x="439.40" y="201.79" width="1.7" height="1.7" fill="#fff"/>
<path d="M445.90 221.42V217.32H447.60" stroke="#4c9c58" stroke-width=".65" fill="none"/>
<circle cx="449.00" cy="217.82" r="1.75" fill="#52d866"/>
<rect x="451.30" y="219.12" width="1.7" height="1.7" fill="#fff"/>
<path d="M504.40 201.34H509.70V204.64H507.60" stroke="#7a3030" stroke-width=".65" fill="none"/>
<circle cx="506.00" cy="204.64" r="1.75" fill="#e03434"/>
<rect x="502.00" y="201.79" width="1.7" height="1.7" fill="#fff"/>
<path d="M566.30 190.17V186.07H568.00" stroke="#4c9c58" stroke-width=".65" fill="none"/>
<circle cx="569.40" cy="186.57" r="1.75" fill="#52d866"/>
<rect x="571.70" y="187.87" width="1.7" height="1.7" fill="#fff"/>
<path d="M566.30 221.42V217.32H568.00" stroke="#4c9c58" stroke-width=".65" fill="none"/>
<circle cx="569.40" cy="217.82" r="1.75" fill="#52d866"/>
<rect x="571.70" y="219.12" width="1.7" height="1.7" fill="#fff"/>
<path d="M508.40 232.59H513.70V235.89H511.60" stroke="#4c9c58" stroke-width=".65" fill="none"/>
<circle cx="510.00" cy="235.89" r="1.75" fill="#52d866"/>
<path d="M566.50 252.67V248.57H568.20" stroke="#4c9c58" stroke-width=".65" fill="none"/>
<circle cx="569.60" cy="249.07" r="1.75" fill="#52d866"/>
<rect x="571.90" y="250.37" width="1.7" height="1.7" fill="#fff"/>
<path d="M508.40 263.84H513.70V267.14H511.60" stroke="#7a3030" stroke-width=".65" fill="none"/>
<circle cx="510.00" cy="267.14" r="1.75" fill="#e03434"/>
<path d="M637.80 201.34H643.10V204.64H641.00" stroke="#b4b470" stroke-width=".65" fill="none"/>
<circle cx="639.40" cy="204.64" r="1.75" fill="#eef25a"/>
<rect x="635.40" y="201.79" width="1.7" height="1.7" fill="#fff"/>
<path d="M637.40 222.17H642.70V225.47H640.60" stroke="#7a3030" stroke-width=".65" fill="none"/>
<circle cx="639.00" cy="225.47" r="1.75" fill="#e03434"/>
<path d="M637.40 232.59H642.70V235.89H640.60" stroke="#4c9c58" stroke-width=".65" fill="none"/>
<circle cx="639.00" cy="235.89" r="1.75" fill="#52d866"/>
<rect x="635.00" y="233.04" width="1.7" height="1.7" fill="#fff"/>
<path d="M637.40 263.84H642.70V267.14H640.60" stroke="#b4b470" stroke-width=".65" fill="none"/>
<circle cx="639.00" cy="267.14" r="1.75" fill="#eef25a"/>
<rect x="635.00" y="264.29" width="1.7" height="1.7" fill="#fff"/>
<text x="128" y="296.66" font-size="4.6" fill="#dcdcdc" textLength="44.5" lengthAdjust="spacingAndGlyphs">LIVERPOOL STREET</text>
<text x="451.25" y="171.66" font-size="4.6" fill="#dcdcdc" textLength="51.2" lengthAdjust="spacingAndGlyphs">BISHOPSGATE TUNNEL</text>
<text x="539" y="188.56" font-size="4.6" fill="#dcdcdc" textLength="24.7" lengthAdjust="spacingAndGlyphs">SUBURBAN</text>
<text x="539" y="219.46" font-size="4.6" fill="#dcdcdc" textLength="12.2" lengthAdjust="spacingAndGlyphs">MAIN</text>
<text x="539" y="250.66" font-size="4.6" fill="#dcdcdc" textLength="21.6" lengthAdjust="spacingAndGlyphs">ELECTRIC</text>
<text x="457" y="283.86" font-size="4.6" fill="#dcdcdc" textLength="46" lengthAdjust="spacingAndGlyphs">WHELER STREET JN</text>
<text x="137" y="67.09" font-size="4.5" fill="#dcdcdc" font-family="'Liberation Mono','DejaVu Sans Mono',monospace" textLength="10.8" lengthAdjust="spacingAndGlyphs">2G02</text>
<text x="137" y="129.59" font-size="4.5" fill="#dcdcdc" font-family="'Liberation Mono','DejaVu Sans Mono',monospace" textLength="10.8" lengthAdjust="spacingAndGlyphs">1B06</text>
<text x="89" y="171.26" font-size="4.5" fill="#dcdcdc" font-family="'Liberation Mono','DejaVu Sans Mono',monospace" textLength="10.8" lengthAdjust="spacingAndGlyphs">1F02</text>
<text x="324.4" y="160.84" font-size="4.5" fill="#dcdcdc" font-family="'Liberation Mono','DejaVu Sans Mono',monospace" textLength="10.8" lengthAdjust="spacingAndGlyphs">1B04</text>
<text x="451.9" y="202.51" font-size="4.5" fill="#dcdcdc" font-family="'Liberation Mono','DejaVu Sans Mono',monospace" textLength="10.8" lengthAdjust="spacingAndGlyphs">5H00</text>
</g>
<g fill="none" stroke="#333" stroke-width=".8"><path d="M4.1 316.6l-1.7 1.7 1.7 1.7"/><path d="M667.3 316.6l-1.7 1.7 1.7 1.7"/></g>
<path d="M670.6 316.6l1.7 1.7-1.7 1.7" fill="none" stroke="#f4f4f4" stroke-width=".8"/>
<path d="M6.20 326.30L9.40 326.30" stroke="#4a4a4a" stroke-width="0.6"/>
<path d="M9.40 326.30L9.40 330.00" stroke="#4a4a4a" stroke-width="0.6"/>
<path d="M9.40 330.00L9.40 333.70" stroke="#4a4a4a" stroke-width="0.6"/>
<path d="M6.20 333.70L9.40 333.70" stroke="#4a4a4a" stroke-width="0.6"/>
<path d="M6.20 330.00L6.20 333.70" stroke="#4a4a4a" stroke-width="0.6"/>
<path d="M6.20 326.30L6.20 330.00" stroke="#4a4a4a" stroke-width="0.6"/>
<path d="M10.20 326.30L13.40 326.30" stroke="#4a4a4a" stroke-width="0.6"/>
<path d="M10.20 326.30L10.20 330.00" stroke="#4a4a4a" stroke-width="0.6"/>
<path d="M10.20 330.00L13.40 330.00" stroke="#4a4a4a" stroke-width="0.6"/>
<path d="M13.40 330.00L13.40 333.70" stroke="#4a4a4a" stroke-width="0.6"/>
<path d="M10.20 333.70L13.40 333.70" stroke="#4a4a4a" stroke-width="0.6"/>
<path d="M22.30 326.30L22.30 330.00" stroke="#4a4a4a" stroke-width="0.6"/>
<path d="M22.30 330.00L22.30 333.70" stroke="#4a4a4a" stroke-width="0.6"/>
<path d="M23.40 326.30L26.60 326.30" stroke="#4a4a4a" stroke-width="0.6"/>
<path d="M26.60 326.30L26.60 330.00" stroke="#4a4a4a" stroke-width="0.6"/>
<path d="M26.60 330.00L26.60 333.70" stroke="#4a4a4a" stroke-width="0.6"/>
<path d="M23.40 333.70L26.60 333.70" stroke="#4a4a4a" stroke-width="0.6"/>
<path d="M23.40 330.00L23.40 333.70" stroke="#4a4a4a" stroke-width="0.6"/>
<path d="M23.40 326.30L23.40 330.00" stroke="#4a4a4a" stroke-width="0.6"/>
<path d="M31.90 326.30L35.10 326.30" stroke="#4a4a4a" stroke-width="0.6"/>
<path d="M35.10 326.30L35.10 330.00" stroke="#4a4a4a" stroke-width="0.6"/>
<path d="M31.90 330.00L35.10 330.00" stroke="#4a4a4a" stroke-width="0.6"/>
<path d="M35.10 330.00L35.10 333.70" stroke="#4a4a4a" stroke-width="0.6"/>
<path d="M31.90 333.70L35.10 333.70" stroke="#4a4a4a" stroke-width="0.6"/>
<path d="M36.00 326.30L39.20 326.30" stroke="#4a4a4a" stroke-width="0.6"/>
<path d="M39.20 326.30L39.20 330.00" stroke="#4a4a4a" stroke-width="0.6"/>
<path d="M36.00 330.00L39.20 330.00" stroke="#4a4a4a" stroke-width="0.6"/>
<path d="M36.00 330.00L36.00 333.70" stroke="#4a4a4a" stroke-width="0.6"/>
<path d="M36.00 333.70L39.20 333.70" stroke="#4a4a4a" stroke-width="0.6"/>
<path d="M16.3 328.6v.7M16.3 331.2v.7M29.3 328.6v.7M29.3 331.2v.7" stroke="#777" stroke-width=".6"/>
<path d="M668.40 326.30L671.60 326.30" stroke="#3c3c3c" stroke-width="0.8"/>
<path d="M671.60 326.30L671.60 330.00" stroke="#3c3c3c" stroke-width="0.8"/>
<path d="M668.40 330.00L671.60 330.00" stroke="#3c3c3c" stroke-width="0.8"/>
<path d="M671.60 330.00L671.60 333.70" stroke="#3c3c3c" stroke-width="0.8"/>
<path d="M668.40 333.70L671.60 333.70" stroke="#3c3c3c" stroke-width="0.8"/>
<path d="M154.60000000000002 329.6l1.2-1.6 1.2 1.6M154.60000000000002 331.2l1.2 1.6 1.2-1.6" fill="none" stroke="#333" stroke-width=".8"/>
<path d="M198.60000000000002 329.6l1.2-1.6 1.2 1.6M198.60000000000002 331.2l1.2 1.6 1.2-1.6" fill="none" stroke="#333" stroke-width=".8"/>
<path d="M793.6 19.6l1.2 1.2-1.2 1.2-1.2-1.2z" fill="#666"/>
<path d="M793.6 127.2l1.2 1.2-1.2 1.2-1.2-1.2z" fill="#666"/>
<path d="M793.6 207.0l1.2 1.2-1.2 1.2-1.2-1.2z" fill="#666"/>
<path d="M393.6 342.2l1.2 1.2-1.2 1.2-1.2-1.2z" fill="#666"/>
<path d="M793.6 342.2l1.2 1.2-1.2 1.2-1.2-1.2z" fill="#666"/>
<g fill="none" stroke="#444" stroke-width=".6"><path d="M792.9 320.4l1.4-1.5 1.4 1.5M792.9 325.2l1.4 1.5 1.4-1.5"/><path d="M792.9 218.4l1.4-1.5 1.4 1.5"/><path d="M392.6 461.6l1.3-1.3 1.3 1.3M392.6 465.8l1.3 1.3 1.3-1.3"/><path d="M783.6 331.6l-1.4 1.4 1.4 1.4" opacity=".4"/><path d="M787.4 331.6l1.4 1.4-1.4 1.4"/></g>
</svg>
</body></html>
